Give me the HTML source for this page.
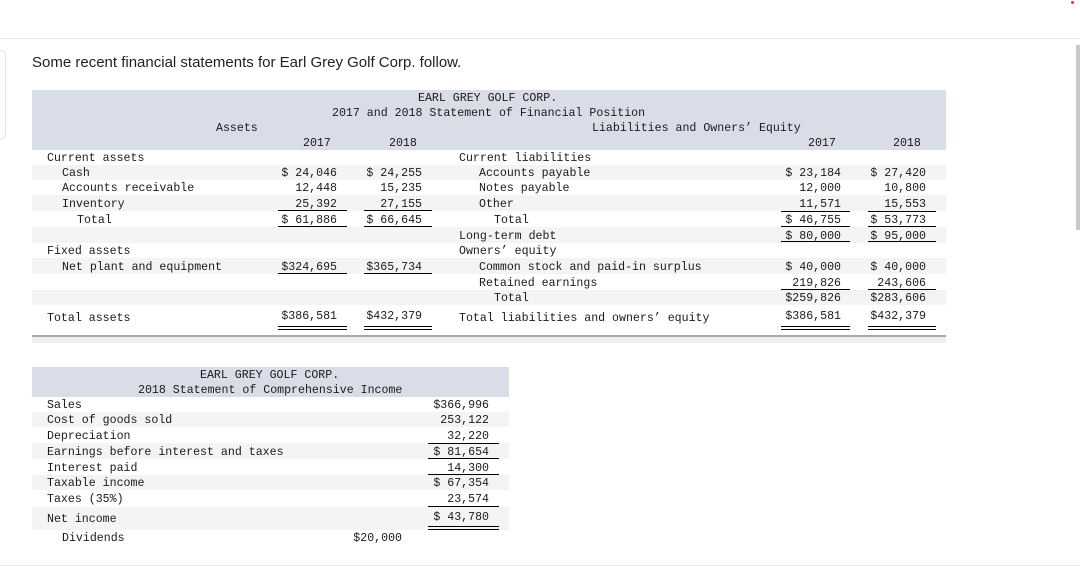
<!DOCTYPE html>
<html><head><meta charset="utf-8"><style>
body{margin:0;width:1080px;height:568px;background:#fff;position:relative;overflow:hidden;font-family:"Liberation Mono",monospace;font-size:11.6px;color:#1a1a1a}
.a{position:absolute;white-space:pre;line-height:14px;margin-top:1px}
.r{position:absolute;white-space:pre;line-height:14px;text-align:right;width:120px;margin-top:1px}
.b{position:absolute}
.l{position:absolute;height:1px;background:#000}
</style></head><body>
<div class="b" style="left:0;top:38px;width:1080px;height:1px;background:#e6e6e6"></div>
<div class="b" style="left:-10px;top:50px;width:14px;height:88px;border:1px solid #e3e3e3;border-radius:6px"></div>
<div class="b" style="left:1076px;top:45px;width:4px;height:185px;background:#c8c8c8"></div>
<div class="b" style="left:1071px;top:1px;width:3px;height:3px;background:#e33;border-radius:50%"></div>
<div class="b" style="left:0;top:565px;width:1080px;height:1px;background:#e6e6e6"></div>
<div class="a" style="left:32px;top:53px;font-family:'Liberation Sans',sans-serif;font-size:15px;line-height:18px;color:#222">Some recent financial statements for Earl Grey Golf Corp. follow.</div>

<div class="b" style="left:32px;top:90px;width:914px;height:60px;background:#d9dde8"></div>
<div class="b" style="left:32px;top:165px;width:914px;height:15px;background:#f4f4f4"></div>
<div class="b" style="left:32px;top:195px;width:914px;height:16px;background:#f4f4f4"></div>
<div class="b" style="left:32px;top:227px;width:914px;height:16px;background:#f4f4f4"></div>
<div class="b" style="left:32px;top:258px;width:914px;height:16px;background:#f4f4f4"></div>
<div class="b" style="left:32px;top:290px;width:914px;height:15px;background:#f4f4f4"></div>
<div class="b" style="left:32px;top:335px;width:914px;height:2px;background:#aaa"></div>
<div class="b" style="left:32px;top:337px;width:914px;height:6px;background:#eef0f4"></div>

<div class="a" style="left:418px;top:91px">EARL GREY GOLF CORP.</div>
<div class="a" style="left:332px;top:106px">2017 and 2018 Statement of Financial Position</div>
<div class="a" style="left:216px;top:121px">Assets</div>
<div class="a" style="left:592px;top:121px">Liabilities and Owners’ Equity</div>
<div class="a" style="left:303px;top:136px">2017</div>
<div class="a" style="left:389px;top:136px">2018</div>
<div class="a" style="left:808px;top:136px">2017</div>
<div class="a" style="left:893px;top:136px">2018</div>

<div class="a" style="left:47px;top:151px">Current assets</div>
<div class="a" style="left:62px;top:166px">Cash</div>
<div class="a" style="left:62px;top:181px">Accounts receivable</div>
<div class="a" style="left:62px;top:197px">Inventory</div>
<div class="a" style="left:77px;top:213px">Total</div>
<div class="a" style="left:47px;top:244px">Fixed assets</div>
<div class="a" style="left:62px;top:260px">Net plant and equipment</div>
<div class="a" style="left:47px;top:311px">Total assets</div>

<div class="r" style="left:217px;top:166px">$ 24,046</div>
<div class="r" style="left:217px;top:181px">12,448</div>
<div class="r" style="left:217px;top:197px">25,392</div>
<div class="r" style="left:217px;top:213px">$ 61,886</div>
<div class="r" style="left:217px;top:260px">$324,695</div>
<div class="r" style="left:217px;top:309px">$386,581</div>
<div class="r" style="left:302px;top:166px">$ 24,255</div>
<div class="r" style="left:302px;top:181px">15,235</div>
<div class="r" style="left:302px;top:197px">27,155</div>
<div class="r" style="left:302px;top:213px">$ 66,645</div>
<div class="r" style="left:302px;top:260px">$365,734</div>
<div class="r" style="left:302px;top:309px">$432,379</div>
<div class="l" style="left:278px;top:210px;width:69px"></div>
<div class="l" style="left:364px;top:210px;width:68px"></div>
<div class="l" style="left:278px;top:226px;width:69px"></div>
<div class="l" style="left:364px;top:226px;width:68px"></div>
<div class="l" style="left:278px;top:273px;width:69px"></div>
<div class="l" style="left:364px;top:273px;width:68px"></div>
<div class="l" style="left:278px;top:326px;width:69px"></div>
<div class="l" style="left:364px;top:326px;width:68px"></div>
<div class="l" style="left:278px;top:329px;width:69px"></div>
<div class="l" style="left:364px;top:329px;width:68px"></div>

<div class="a" style="left:459px;top:151px">Current liabilities</div>
<div class="a" style="left:479px;top:166px">Accounts payable</div>
<div class="a" style="left:479px;top:181px">Notes payable</div>
<div class="a" style="left:479px;top:197px">Other</div>
<div class="a" style="left:494px;top:213px">Total</div>
<div class="a" style="left:459px;top:229px">Long-term debt</div>
<div class="a" style="left:459px;top:244px">Owners’ equity</div>
<div class="a" style="left:479px;top:260px">Common stock and paid-in surplus</div>
<div class="a" style="left:479px;top:276px">Retained earnings</div>
<div class="a" style="left:494px;top:291px">Total</div>
<div class="a" style="left:459px;top:311px">Total liabilities and owners’ equity</div>

<div class="r" style="left:721px;top:166px">$ 23,184</div>
<div class="r" style="left:721px;top:181px">12,000</div>
<div class="r" style="left:721px;top:197px">11,571</div>
<div class="r" style="left:721px;top:213px">$ 46,755</div>
<div class="r" style="left:721px;top:229px">$ 80,000</div>
<div class="r" style="left:721px;top:260px">$ 40,000</div>
<div class="r" style="left:721px;top:276px">219,826</div>
<div class="r" style="left:721px;top:291px">$259,826</div>
<div class="r" style="left:721px;top:309px">$386,581</div>
<div class="r" style="left:806px;top:166px">$ 27,420</div>
<div class="r" style="left:806px;top:181px">10,800</div>
<div class="r" style="left:806px;top:197px">15,553</div>
<div class="r" style="left:806px;top:213px">$ 53,773</div>
<div class="r" style="left:806px;top:229px">$ 95,000</div>
<div class="r" style="left:806px;top:260px">$ 40,000</div>
<div class="r" style="left:806px;top:276px">243,606</div>
<div class="r" style="left:806px;top:291px">$283,606</div>
<div class="r" style="left:806px;top:309px">$432,379</div>
<div class="l" style="left:781px;top:211px;width:69px"></div>
<div class="l" style="left:868px;top:211px;width:68px"></div>
<div class="l" style="left:781px;top:226px;width:69px"></div>
<div class="l" style="left:868px;top:226px;width:68px"></div>
<div class="l" style="left:781px;top:241px;width:69px"></div>
<div class="l" style="left:868px;top:241px;width:68px"></div>
<div class="l" style="left:781px;top:289px;width:69px"></div>
<div class="l" style="left:868px;top:289px;width:68px"></div>
<div class="l" style="left:781px;top:326px;width:69px"></div>
<div class="l" style="left:868px;top:326px;width:68px"></div>
<div class="l" style="left:781px;top:329px;width:69px"></div>
<div class="l" style="left:868px;top:329px;width:68px"></div>

<div class="b" style="left:32px;top:367px;width:477px;height:30px;background:#d9dde8"></div>
<div class="b" style="left:32px;top:412px;width:477px;height:15px;background:#f4f4f4"></div>
<div class="b" style="left:32px;top:443px;width:477px;height:16px;background:#f4f4f4"></div>
<div class="b" style="left:32px;top:475px;width:477px;height:15px;background:#f4f4f4"></div>
<div class="b" style="left:32px;top:507px;width:477px;height:23px;background:#f4f4f4"></div>
<div class="a" style="left:200px;top:368px">EARL GREY GOLF CORP.</div>
<div class="a" style="left:138px;top:383px">2018 Statement of Comprehensive Income</div>
<div class="a" style="left:47px;top:398px">Sales</div>
<div class="a" style="left:47px;top:413px">Cost of goods sold</div>
<div class="a" style="left:47px;top:429px">Depreciation</div>
<div class="a" style="left:47px;top:445px">Earnings before interest and taxes</div>
<div class="a" style="left:47px;top:461px">Interest paid</div>
<div class="a" style="left:47px;top:476px">Taxable income</div>
<div class="a" style="left:47px;top:492px">Taxes (35%)</div>
<div class="a" style="left:47px;top:512px">Net income</div>
<div class="a" style="left:62px;top:531px">Dividends</div>
<div class="r" style="left:369px;top:398px">$366,996</div>
<div class="r" style="left:369px;top:413px">253,122</div>
<div class="r" style="left:369px;top:429px">32,220</div>
<div class="r" style="left:369px;top:445px">$ 81,654</div>
<div class="r" style="left:369px;top:461px">14,300</div>
<div class="r" style="left:369px;top:476px">$ 67,354</div>
<div class="r" style="left:369px;top:492px">23,574</div>
<div class="r" style="left:369px;top:510px">$ 43,780</div>
<div class="r" style="left:282px;top:531px">$20,000</div>
<div class="l" style="left:428px;top:443px;width:71px"></div>
<div class="l" style="left:428px;top:458px;width:71px"></div>
<div class="l" style="left:428px;top:474px;width:71px"></div>
<div class="l" style="left:428px;top:506px;width:71px"></div>
<div class="l" style="left:428px;top:526px;width:71px"></div>
<div class="l" style="left:428px;top:529px;width:71px"></div>
</body></html>
